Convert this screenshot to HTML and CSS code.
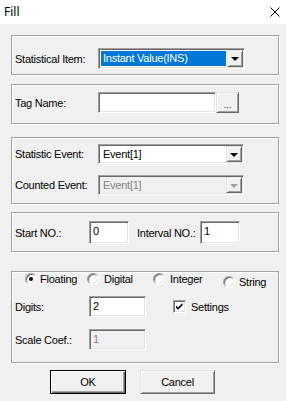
FILE: index.html
```html
<!DOCTYPE html>
<html>
<head>
<meta charset="utf-8">
<link rel="stylesheet" href="styles.css">
</head>
<body>
<div class="window">
  <div class="titlebar">
    <span class="title">Fill</span>
    <svg class="close" width="10" height="10" viewBox="0 0 10 10"><path d="M0.5 0.5 L9.5 9.5 M9.5 0.5 L0.5 9.5" stroke="#000" stroke-width="1" fill="none"/></svg>
  </div>

  <div class="group g1">
    <div class="row">
      <span class="lbl lbl-wide">Statistical Item:</span>
      <div class="combo combo-1">
        <div class="combo-field"><span class="sel">Instant Value(INS)</span></div>
        <div class="combo-btn"><span class="arrow"></span></div>
      </div>
    </div>
  </div>

  <div class="group g2">
    <div class="row">
      <span class="lbl lbl-wide">Tag Name:</span>
      <div class="field tag-field"></div>
      <div class="button dots">...</div>
    </div>
  </div>

  <div class="group g3">
    <div class="row">
      <span class="lbl lbl-wide">Statistic Event:</span>
      <div class="combo combo-2">
        <div class="combo-field"><span class="val">Event[1]</span></div>
        <div class="combo-btn"><span class="arrow"></span></div>
      </div>
    </div>
    <div class="row row-gap">
      <span class="lbl lbl-wide">Counted Event:</span>
      <div class="combo combo-2 disabled">
        <div class="combo-field"><span class="val">Event[1]</span></div>
        <div class="combo-btn"><span class="arrow"></span></div>
      </div>
    </div>
  </div>

  <div class="group g4">
    <div class="row">
      <span class="lbl lbl-start">Start NO.:</span>
      <div class="field num-field"><span class="val">0</span></div>
      <span class="lbl lbl-interval">Interval NO.:</span>
      <div class="field num-field"><span class="val">1</span></div>
    </div>
  </div>

  <div class="group g5">
    <div class="radios">
      <span class="radio-item r-float"><span class="radio checked"></span><span class="rtext">Floating</span></span>
      <span class="radio-item r-digital"><span class="radio"></span><span class="rtext">Digital</span></span>
      <span class="radio-item r-integer"><span class="radio"></span><span class="rtext">Integer</span></span>
      <span class="radio-item r-string"><span class="radio"></span><span class="rtext">String</span></span>
    </div>
    <div class="row digits-row">
      <span class="lbl lbl-start">Digits:</span>
      <div class="field coef-field"><span class="val">2</span></div>
      <span class="check-item">
        <span class="checkbox"><svg width="9" height="9" viewBox="0 0 9 9"><path d="M1 3.5 L3 5.5 L7.5 1 L7.5 3.2 L3 7.7 L1 5.7 Z" fill="#000"/></svg></span>
        <span class="ctext">Settings</span>
      </span>
    </div>
    <div class="row scale-row">
      <span class="lbl lbl-start">Scale Coef.:</span>
      <div class="field coef-field disabled"><span class="val">1</span></div>
    </div>
  </div>

  <div class="buttons">
    <div class="button ok">OK</div>
    <div class="button cancel">Cancel</div>
  </div>
</div>
</body>
</html>
```

FILE: styles.css
```css
* { box-sizing: border-box; }
html, body { margin: 0; padding: 0; }
body {
  background: #f0f0f0;
  font-family: "Liberation Sans", Arial, sans-serif;
  font-size: 11px;
  letter-spacing: -0.25px;
  color: #000;
}
.window {
  width: 286px;
  height: 401px;
  background: #f0f0f0;
  overflow: hidden;
}
.titlebar {
  height: 24px;
  background: #fff;
  display: flex;
  align-items: center;
  justify-content: space-between;
  padding: 0 6px 0 4px;
}
.title {
  font-family: "Noto Sans", "Open Sans", sans-serif;
  font-size: 12px;
  letter-spacing: 0;
  color: #000;
  margin-top: -1px;
}
.close { display: block; margin-top: -1px; }

.group {
  margin-left: 11px;
  width: 268px;
  border: 1px solid #a0a0a0;
  box-shadow: inset 1px 1px #fff, 1px 1px #fff;
}
.g1 { margin-top: 11px; height: 40px; padding: 12px 0 0 3px; }
.g2 { margin-top: 9px; height: 40px; padding: 7px 0 0 3px; }
.g3 { margin-top: 13px; height: 67px; padding: 6px 0 0 3px; }
.g4 { margin-top: 8px; height: 40px; padding: 8px 0 0 3px; }
.g5 { margin-top: 19px; height: 92px; padding: 1px 0 0 3px; }

.row { display: flex; align-items: center; }
.row-gap { margin-top: 11px; }
.lbl { white-space: nowrap; }
.lbl-wide { width: 83px; }
.lbl-start { width: 74px; }
.lbl-interval { width: 63px; margin-left: 8px; }

/* sunken 3D edge */
.combo, .field, .radio, .checkbox {
  border: 1px solid;
  border-color: #a0a0a0 #fff #fff #a0a0a0;
  box-shadow: inset 1px 1px #696969, inset -1px -1px #e3e3e3;
  background: #fff;
}
.combo {
  height: 21px;
  display: flex;
  padding: 1px;
}
.combo-1 { width: 147px; }
.combo-2 { width: 146px; height: 20px; }
.combo-field {
  flex: 1;
  padding: 1px;
  display: flex;
  align-items: stretch;
}
.sel {
  flex: 1;
  background: #0078d7;
  color: #fff;
  padding-left: 2px;
  line-height: 15px;
}
.val { padding-left: 2px; line-height: 15px; }
.combo-btn {
  width: 16px;
  background: #f0f0f0;
  border: 1px solid;
  border-color: #e3e3e3 #696969 #696969 #e3e3e3;
  box-shadow: inset 1px 1px #fff, inset -1px -1px #a0a0a0;
  display: flex;
  align-items: center;
  justify-content: center;
}
.arrow {
  width: 0; height: 0;
  border-left: 4px solid transparent;
  border-right: 4px solid transparent;
  border-top: 4px solid #000;
  margin-top: 1px;
}
.combo.disabled, .field.disabled { background: #f0f0f0; }
.combo.disabled .val, .field.disabled .val { color: #838383; }
.combo.disabled .arrow { border-top-color: #a0a0a0; }

.field { height: 21px; padding: 2px 0 0 1px; }
.tag-field { width: 118px; }
.num-field { width: 40px; height: 23px; }
.coef-field { width: 57px; height: 21px; }

.button {
  background: #f0f0f0;
  border: 1px solid;
  border-color: #e3e3e3 #696969 #696969 #e3e3e3;
  box-shadow: inset 1px 1px #fff, inset -1px -1px #a0a0a0;
  display: flex;
  align-items: center;
  justify-content: center;
}
.dots { width: 23px; height: 21px; padding-top: 4px; font-size: 9px; letter-spacing: 0; }

.radios { display: flex; height: 13px; align-items: flex-start; }
.radio-item { display: flex; align-items: center; }
.radio {
  width: 12px; height: 12px;
  border-radius: 50%;
  display: inline-flex;
  align-items: center;
  justify-content: center;
  flex: none;
}
.radio.checked::after {
  content: "";
  width: 4px; height: 4px;
  border-radius: 50%;
  background: #000;
}
.rtext { margin-left: 4px; }
.r-float { margin-left: 10px; width: 62px; }
.r-float .rtext { margin-left: 3px; }
.r-digital { width: 66px; }
.r-digital .rtext, .r-integer .rtext { margin-left: 5px; }
.r-integer { width: 70px; }
.r-string { margin-top: 3px; }

.digits-row { margin-top: 10px; }
.check-item { display: flex; align-items: center; margin-left: 27px; }
.checkbox {
  width: 13px; height: 13px;
  display: flex; align-items: center; justify-content: center;
}
.checkbox svg { display: block; }
.ctext { margin-left: 5px; }
.scale-row { margin-top: 12px; }

.buttons {
  display: flex;
  margin-top: 7px;
  padding-left: 50px;
}
.buttons .button { height: 24px; }
.ok { width: 76px; border-color: #000; box-shadow: inset 1px 1px #fff, inset -1px -1px #696969, inset -2px -2px #a0a0a0; }
.cancel { width: 75px; margin-left: 14px; }
```
